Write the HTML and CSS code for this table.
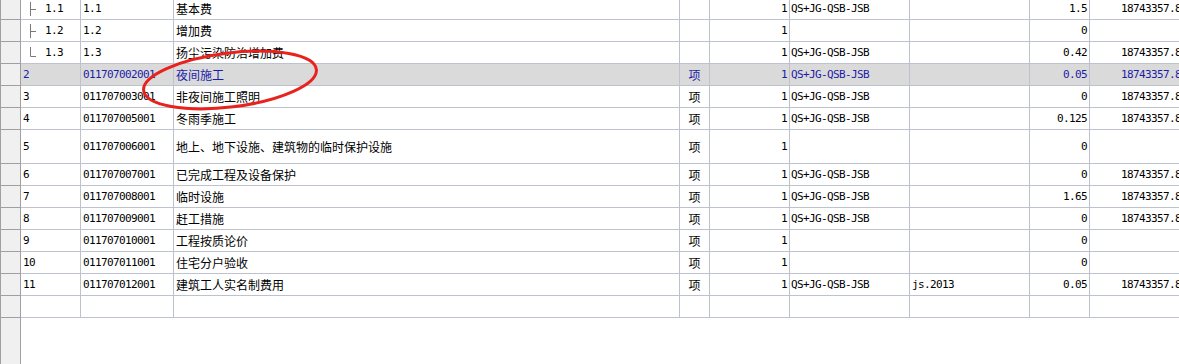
FILE: index.html
```html
<!DOCTYPE html>
<html lang="zh-CN">
<head>
<meta charset="utf-8">
<title>措施项目</title>
<link rel="stylesheet" href="styles.css">
</head>
<body>
<div class="page">
  <div class="sheet">
    <div class="row">
      <div class="hdr"></div>
      <div class="c a"><svg class="tree" width="12" height="14" viewBox="0 0 12 14"><path d="M0.5 0V14M0.5 7.5H6"/></svg><span>1.1</span></div>
      <div class="c b">1.1</div>
      <div class="c cn">基本费</div>
      <div class="c u"></div>
      <div class="c r">1</div>
      <div class="c f">QS+JG-QSB-JSB</div>
      <div class="c g"></div>
      <div class="c r">1.5</div>
      <div class="c r">18743357.8</div>
    </div>
    <div class="row">
      <div class="hdr"></div>
      <div class="c a"><svg class="tree" width="12" height="14" viewBox="0 0 12 14"><path d="M0.5 0V14M0.5 7.5H6"/></svg><span>1.2</span></div>
      <div class="c b">1.2</div>
      <div class="c cn">增加费</div>
      <div class="c u"></div>
      <div class="c r">1</div>
      <div class="c f"></div>
      <div class="c g"></div>
      <div class="c r">0</div>
      <div class="c r"></div>
    </div>
    <div class="row">
      <div class="hdr"></div>
      <div class="c a"><svg class="tree" width="12" height="14" viewBox="0 0 12 14"><path d="M0.5 1V10.5H6"/></svg><span>1.3</span></div>
      <div class="c b">1.3</div>
      <div class="c cn">扬尘污染防治增加费</div>
      <div class="c u"></div>
      <div class="c r">1</div>
      <div class="c f">QS+JG-QSB-JSB</div>
      <div class="c g"></div>
      <div class="c r">0.42</div>
      <div class="c r">18743357.8</div>
    </div>
    <div class="row sel">
      <div class="hdr"></div>
      <div class="c a">2</div>
      <div class="c b">011707002001</div>
      <div class="c cn">夜间施工</div>
      <div class="c u">项</div>
      <div class="c r">1</div>
      <div class="c f">QS+JG-QSB-JSB</div>
      <div class="c g"></div>
      <div class="c r">0.05</div>
      <div class="c r">18743357.8</div>
    </div>
    <div class="row">
      <div class="hdr"></div>
      <div class="c a">3</div>
      <div class="c b">011707003001</div>
      <div class="c cn">非夜间施工照明</div>
      <div class="c u">项</div>
      <div class="c r">1</div>
      <div class="c f">QS+JG-QSB-JSB</div>
      <div class="c g"></div>
      <div class="c r">0</div>
      <div class="c r">18743357.8</div>
    </div>
    <div class="row">
      <div class="hdr"></div>
      <div class="c a">4</div>
      <div class="c b">011707005001</div>
      <div class="c cn">冬雨季施工</div>
      <div class="c u">项</div>
      <div class="c r">1</div>
      <div class="c f">QS+JG-QSB-JSB</div>
      <div class="c g"></div>
      <div class="c r">0.125</div>
      <div class="c r">18743357.8</div>
    </div>
    <div class="row tall">
      <div class="hdr"></div>
      <div class="c a">5</div>
      <div class="c b">011707006001</div>
      <div class="c cn">地上、地下设施、建筑物的临时保护设施</div>
      <div class="c u">项</div>
      <div class="c r">1</div>
      <div class="c f"></div>
      <div class="c g"></div>
      <div class="c r">0</div>
      <div class="c r"></div>
    </div>
    <div class="row">
      <div class="hdr"></div>
      <div class="c a">6</div>
      <div class="c b">011707007001</div>
      <div class="c cn">已完成工程及设备保护</div>
      <div class="c u">项</div>
      <div class="c r">1</div>
      <div class="c f">QS+JG-QSB-JSB</div>
      <div class="c g"></div>
      <div class="c r">0</div>
      <div class="c r">18743357.8</div>
    </div>
    <div class="row">
      <div class="hdr"></div>
      <div class="c a">7</div>
      <div class="c b">011707008001</div>
      <div class="c cn">临时设施</div>
      <div class="c u">项</div>
      <div class="c r">1</div>
      <div class="c f">QS+JG-QSB-JSB</div>
      <div class="c g"></div>
      <div class="c r">1.65</div>
      <div class="c r">18743357.8</div>
    </div>
    <div class="row">
      <div class="hdr"></div>
      <div class="c a">8</div>
      <div class="c b">011707009001</div>
      <div class="c cn">赶工措施</div>
      <div class="c u">项</div>
      <div class="c r">1</div>
      <div class="c f">QS+JG-QSB-JSB</div>
      <div class="c g"></div>
      <div class="c r">0</div>
      <div class="c r">18743357.8</div>
    </div>
    <div class="row">
      <div class="hdr"></div>
      <div class="c a">9</div>
      <div class="c b">011707010001</div>
      <div class="c cn">工程按质论价</div>
      <div class="c u">项</div>
      <div class="c r">1</div>
      <div class="c f"></div>
      <div class="c g"></div>
      <div class="c r">0</div>
      <div class="c r"></div>
    </div>
    <div class="row">
      <div class="hdr"></div>
      <div class="c a">10</div>
      <div class="c b">011707011001</div>
      <div class="c cn">住宅分户验收</div>
      <div class="c u">项</div>
      <div class="c r">1</div>
      <div class="c f"></div>
      <div class="c g"></div>
      <div class="c r">0</div>
      <div class="c r"></div>
    </div>
    <div class="row">
      <div class="hdr"></div>
      <div class="c a">11</div>
      <div class="c b">011707012001</div>
      <div class="c cn">建筑工人实名制费用</div>
      <div class="c u">项</div>
      <div class="c r">1</div>
      <div class="c f">QS+JG-QSB-JSB</div>
      <div class="c g">js.2013</div>
      <div class="c r">0.05</div>
      <div class="c r">18743357.8</div>
    </div>
    <div class="row">
      <div class="hdr"></div>
      <div class="c a"></div>
      <div class="c b"></div>
      <div class="c cn"></div>
      <div class="c u"></div>
      <div class="c r"></div>
      <div class="c f"></div>
      <div class="c g"></div>
      <div class="c r"></div>
      <div class="c r"></div>
    </div>
    <div class="filler"></div>
  </div>
  <svg class="mark" width="1179" height="364" viewBox="0 0 1179 364">
    <ellipse cx="230" cy="80" rx="87" ry="27" transform="rotate(-7 230 80)"/>
  </svg>
</div>
</body>
</html>
```

FILE: styles.css
```css
html, body {
  margin: 0;
  padding: 0;
  width: 1179px;
  height: 364px;
  overflow: hidden;
  background: #ffffff;
}

.page {
  position: relative;
  width: 1179px;
  height: 364px;
  overflow: hidden;
}

.sheet {
  display: flex;
  flex-direction: column;
  width: 1184px;
  height: 366px;
  margin-top: -2px;
  font-family: "DejaVu Sans Mono", "Noto Sans CJK SC", monospace;
  font-size: 11px;
  letter-spacing: -0.62px;
  color: #000000;
}

.row {
  display: grid;
  grid-template-columns: 21px 60px 93px 506px 30px 80px 120px 120px 60px 94px;
  height: 22px;
  flex: 0 0 auto;
}

.row.tall {
  height: 34px;
}

.hdr {
  box-sizing: border-box;
  background: #f0f0f0;
  border-left: 1px solid #a0a0a0;
  border-right: 1px solid #a0a0a0;
  border-bottom: 1px solid #a0a0a0;
}

.c {
  box-sizing: border-box;
  display: flex;
  align-items: center;
  border-right: 1px solid #bcc3cf;
  border-bottom: 1px solid #bcc3cf;
  white-space: nowrap;
  overflow: hidden;
  line-height: 1;
}

.a { padding-left: 2px; }
.b { padding-left: 2px; }
.f { padding-left: 1px; }
.g { padding-left: 2px; }

.cn {
  padding-left: 2px;
  font-family: "Noto Sans CJK SC", sans-serif;
  font-size: 12px;
  letter-spacing: 0;
}

.u {
  justify-content: center;
  font-family: "Noto Sans CJK SC", sans-serif;
  font-size: 12px;
  letter-spacing: 0;
}

.r {
  justify-content: flex-end;
  padding-right: 2px;
}

.tree {
  display: block;
  margin-left: 7px;
  margin-right: 3px;
  flex: 0 0 auto;
}

.tree path {
  fill: none;
  stroke: #7a7a7a;
  stroke-width: 1;
}

.sel .c {
  background: #dadada;
  color: #1c1ca8;
}

.filler {
  flex: 1 1 auto;
  width: 21px;
  box-sizing: border-box;
  background: #f0f0f0;
  border-left: 1px solid #a0a0a0;
  border-right: 1px solid #a0a0a0;
}

.mark {
  position: absolute;
  left: 0;
  top: 0;
  pointer-events: none;
}

.mark ellipse {
  fill: none;
  stroke: #e8221c;
  stroke-width: 3;
}
```
